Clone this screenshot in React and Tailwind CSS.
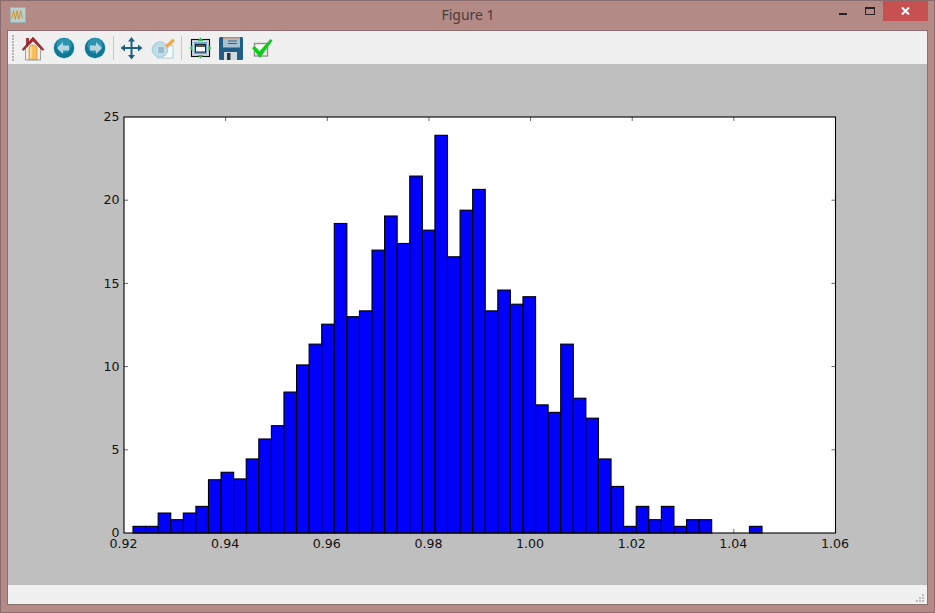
const bins = [
  0.4, 0.4, 1.2, 0.8, 1.2, 1.6, 3.2, 3.65, 3.25, 4.45,
  5.65, 6.45, 8.47, 10.1, 11.35, 12.55, 18.6, 13, 13.35, 17,
  19.05, 17.4, 21.45, 18.2, 23.9, 16.6, 19.4, 20.65, 13.35, 14.6,
  13.75, 14.2, 7.7, 7.25, 11.35, 8.1, 6.9, 4.45, 2.8, 0.4,
  1.6, 0.8, 1.6, 0.4, 0.8, 0.8, 0, 0, 0, 0.4,
]
const xTicks = ['0.92', '0.94', '0.96', '0.98', '1.00', '1.02', '1.04', '1.06']
const yTicks = ['0', '5', '10', '15', '20', '25']

const LEFT = 124, RIGHT = 835.5, TOP = 117, BOTTOM = 533
const BAR_START = 133, BAR_W = 12.58
const tickFont = 'DejaVu Sans, sans-serif'

function Chart() {
  const xStep = (RIGHT - LEFT) / 7
  const yStep = (BOTTOM - TOP) / 5
  return (
    <svg className="block w-[919px] h-[521px]" viewBox="8 64 919 521">
      <rect x={LEFT} y={TOP} width={RIGHT - LEFT} height={BOTTOM - TOP} fill="#fff" />
      {bins.map((v, i) => v > 0 && (
        <rect
          key={i}
          x={BAR_START + i * BAR_W}
          y={BOTTOM - v * 16.64}
          width={BAR_W}
          height={v * 16.64}
          fill="#0000ff"
          stroke="#000"
          strokeWidth="1.1"
        />
      ))}
      {xTicks.map((t, i) => {
        const x = LEFT + i * xStep
        return (
          <g key={t}>
            {i > 0 && i < 7 && <path d={`M${x} ${BOTTOM}v-4M${x} ${TOP}v4`} stroke="#000" strokeWidth="0.6" />}
            <text x={x - 0.5} y="548" textAnchor="middle" fontSize="12.6" fill="#111" fontFamily={tickFont}>{t}</text>
          </g>
        )
      })}
      {yTicks.map((t, i) => {
        const y = BOTTOM - i * yStep
        return (
          <g key={t}>
            {i > 0 && i < 5 && <path d={`M${LEFT} ${y}h4M${RIGHT} ${y}h-4`} stroke="#000" strokeWidth="0.6" />}
            <text x="119.500" y={y + 4.2} textAnchor="end" fontSize="12.6" fill="#111" fontFamily={tickFont}>{t}</text>
          </g>
        )
      })}
      <rect x={LEFT} y={TOP} width={RIGHT - LEFT} height={BOTTOM - TOP} fill="none" stroke="#000" strokeWidth="1.1" />
    </svg>
  )
}

function Icon({ children }) {
  return <svg className="w-7 h-7 shrink-0" viewBox="0 0 28 28">{children}</svg>
}

function HomeIcon() {
  return (
    <Icon>
      <path d="M6.500 13 14 6l7.500 7v13h-15z" fill="#f1efe8" stroke="#8a8a8a" strokeWidth="0.8" />
      <path d="M10 25.500V15c0-2.500 1.500-4 4-4s4 1.500 4 4v10.500z" fill="#f8bd62" stroke="#c98a30" strokeWidth="0.7" />
      <path d="M11 24.500V15c0-1.500 1-2.500 2-3v12.500z" fill="#fbd994" />
      <path d="M7 4h3v5l-3 3z" fill="#a8363f" />
      <path d="M3 15.500 14 3l11 12.500-1.500 1L14 7 4.500 16.500z" fill="#a32a35" stroke="#7d1f28" strokeWidth="0.5" />
    </Icon>
  )
}

function ArrowIcon({ flip }) {
  return (
    <Icon>
      <circle cx="14" cy="14" r="11" fill="#d8e9f1" />
      <circle cx="14" cy="14" r="10.200" fill="#0f7896" />
      <circle cx="14" cy="11.500" r="7.500" fill="#3a9fb9" opacity="0.75" />
      <path d={flip ? 'M15 8l6 6-6 6v-3.500H9v-5h6z' : 'M13 8l-6 6 6 6v-3.500h6v-5h-6z'} fill="#b4d6e2" />
    </Icon>
  )
}

function PanIcon() {
  return (
    <Icon>
      <path
        d="M14.500 3l3.500 4.500h-2.500v5.500h5.500v-2.500l4.500 3.500-4.500 3.500V15h-5.500v6h2.500l-3.500 4.500-3.500-4.500h2.500v-6H8v2.500L3.500 14 8 10.500V13h5.500V7.500H11z"
        fill="#1d6082"
      />
    </Icon>
  )
}

function SubplotsIcon() {
  return (
    <Icon>
      <rect x="8.500" y="11.500" width="15.500" height="12.500" fill="#f6fafb" stroke="#a6d0dc" />
      <circle cx="11" cy="15.500" r="7.800" fill="#bcdbe6" stroke="#a3cbd8" opacity="0.95" />
      <rect x="8" y="12.500" width="7.500" height="7" fill="#d6e8ef" />
      <path d="M9 14h6M9 16h6M9 18h6" stroke="#5f8ea3" strokeWidth="1" />
      <path d="M16 11.500 24 4.500l2 2.500-7.500 7z" fill="#f0a94f" />
    </Icon>
  )
}

function ZoomRectIcon() {
  return (
    <Icon>
      <rect x="5.500" y="5.500" width="18" height="17" fill="#cfd8dc" stroke="#111" strokeWidth="1.100" />
      <rect x="8" y="8" width="13" height="12" fill="#6fa6d8" />
      <rect x="9.500" y="10.500" width="10" height="7.500" fill="#f7f7f7" stroke="#222" />
      <path d="M9.500 12h10" stroke="#222" strokeWidth="1.500" />
      <path d="M14.500 3.500l3 3.500h-6zM14.500 24.500l-3-3.500h6zM3.500 14l3-3v6zM25.500 14l-3 3v-6z" fill="#39b54a" />
    </Icon>
  )
}

function SaveIcon() {
  return (
    <Icon>
      <path d="M2 4.500Q2 3 3.500 3h21Q26 3 26 4.500v20q0 1.500-1.500 1.500h-21Q2 26 2 24.500z" fill="#1f5f86" />
      <rect x="6" y="3" width="17" height="10.500" fill="#a9c0d0" />
      <rect x="6" y="3" width="17" height="1.500" fill="#d9814f" />
      <path d="M11 7h9M11 9.500h9" stroke="#3d6580" strokeWidth="1" />
      <rect x="7" y="18" width="13" height="8" fill="#d2dade" />
      <rect x="10" y="19" width="3.500" height="7" fill="#24384a" />
    </Icon>
  )
}

function CheckIcon() {
  return (
    <Icon>
      <rect x="6.500" y="9.500" width="13" height="12.500" fill="#f8f8f8" stroke="#8f8f8f" strokeWidth="1.400" />
      <path d="M4 14l3-1.800 4.500 5L22.500 5l2 1.500L12 24z" fill="#0fcc1c" />
    </Icon>
  )
}

function Separator({ className = '' }) {
  return <div className={`w-px h-6 mt-[2px] shrink-0 bg-[#c8c8c8] ${className}`} />
}

function ToolbarGrip() {
  return (
    <svg className="w-[3px] h-[26px] mt-px shrink-0" viewBox="0 0 3 26" fill="#b4b4b4">
      {[0, 3, 6, 9, 12, 15, 18, 21, 24].map(y => <rect key={y} x="0" y={y} width="2" height="2" />)}
    </svg>
  )
}

function SizeGrip() {
  return (
    <svg className="w-2 h-2 mr-[3px] mb-[2px]" viewBox="0 0 8 8" fill="#bdbdbd">
      <rect x="6" y="0" width="2" height="2" />
      <rect x="3" y="3" width="2" height="2" />
      <rect x="6" y="3" width="2" height="2" />
      <rect x="0" y="6" width="2" height="2" />
      <rect x="3" y="6" width="2" height="2" />
      <rect x="6" y="6" width="2" height="2" />
    </svg>
  )
}

export default function App() {
  return (
    <div className="w-[935px] h-[613px] flex flex-col bg-[#b48a87] border border-[#8b6b6b] font-['Noto_Sans',sans-serif]">
      {/* Title bar */}
      <div className="h-[29px] flex items-start shrink-0">
        <div className="w-[16px] h-[16px] ml-[9px] mt-[6px] bg-[#b9cfd2] border border-[#9fb0b2]">
          <svg viewBox="0 0 16 16" className="w-full h-full">
            <path d="M1 12 3 3l2 10 2-10 2 10 2-10 2 9" fill="none" stroke="#d68a12" strokeWidth="1" />
          </svg>
        </div>
        <div className="flex-1 text-center text-[14px] leading-[28px] text-[#4b3c3c] pl-[71px]">Figure 1</div>
        <div className="w-2 h-[2px] mt-[12px] bg-[#2c2222] mr-[18px]" />
        <div className="w-[10px] h-[8px] mt-[6px] border border-[#2c2222] border-t-2 mr-[8px]" />
        <div className="w-[45px] h-[20px] mr-[6px] bg-[#c75050] flex items-center justify-center">
          <svg viewBox="0 0 9 8" className="w-[9px] h-[8px]">
            <path d="M1 0.500 8 7.500M8 0.500 1 7.500" stroke="#fff" strokeWidth="2" />
          </svg>
        </div>
      </div>

      {/* Client area */}
      <div className="mx-[6px] flex-1 flex flex-col border border-[#8f7070] min-h-0">
        <div className="h-[33px] shrink-0 bg-[#f0f0f0] flex items-start pl-[4px] pt-[3px]">
          <ToolbarGrip />
          <div className="ml-1"><HomeIcon /></div>
          <div className="ml-[3px]"><ArrowIcon /></div>
          <div className="ml-[3px]"><ArrowIcon flip /></div>
          <Separator className="ml-1" />
          <div className="ml-[3px]"><PanIcon /></div>
          <div className="ml-1"><SubplotsIcon /></div>
          <Separator className="ml-1" />
          <div className="ml-1"><ZoomRectIcon /></div>
          <div className="ml-[3px]"><SaveIcon /></div>
          <div className="ml-[3px]"><CheckIcon /></div>
        </div>
        <div className="h-[521px] shrink-0 bg-[#bfbfbf]">
          <Chart />
        </div>
        <div className="flex-1 bg-[#f0f0f0] flex items-end justify-end">
          <SizeGrip />
        </div>
      </div>
      <div className="h-[7px] shrink-0" />
    </div>
  )
}
